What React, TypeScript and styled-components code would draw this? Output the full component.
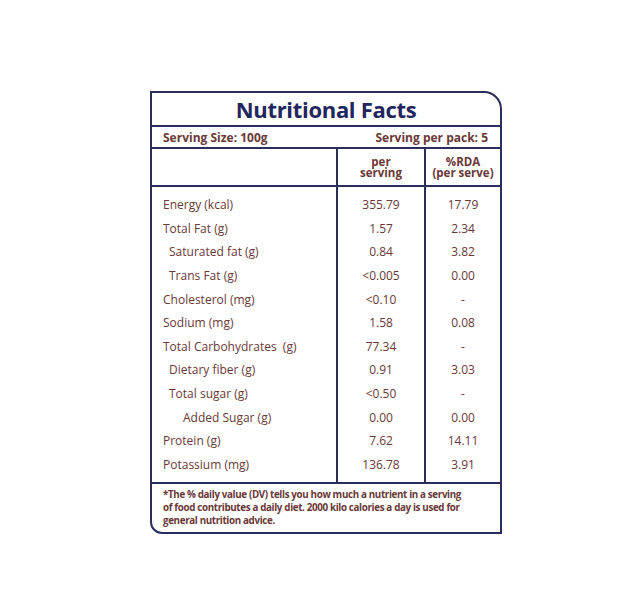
import { FC } from 'react';
import styled, { createGlobalStyle } from 'styled-components';

const GlobalStyle = createGlobalStyle`
  html, body {
    margin: 0;
    padding: 0;
    background: #fff;
  }
  body {
    font-family: 'Open Sans', 'Noto Sans', sans-serif;
  }
`;

const Page = styled.div`
  width: 640px;
  height: 613px;
  padding-top: 91px;
  padding-left: 150px;
  box-sizing: border-box;
`;

const Card = styled.div`
  width: 352px;
  box-sizing: border-box;
  border: 2px solid #2b2d5c;
  border-radius: 0 18px 0 12px;
  color: #6a3837;
`;

const Title = styled.h1`
  margin: 0;
  height: 32px;
  display: flex;
  align-items: center;
  justify-content: center;
  font-size: 22px;
  font-weight: 700;
  color: #23265e;
  letter-spacing: -0.3px;
  border-bottom: 2px solid #2b2d5c;
`;

const ServingRow = styled.div`
  height: 20px;
  display: flex;
  align-items: center;
  justify-content: space-between;
  padding: 0 12px 0 11px;
  font-size: 12px;
  font-weight: 700;
  border-bottom: 2px solid #2b2d5c;
`;

const Grid = styled.div`
  display: grid;
  grid-template-columns: 186px 88px 1fr;
`;

const HeadCell = styled.div<{ $divider?: boolean }>`
  height: 36px;
  display: flex;
  flex-direction: column;
  align-items: center;
  justify-content: center;
  text-align: center;
  font-size: 11.5px;
  font-weight: 700;
  border-bottom: 2px solid #2b2d5c;
  border-right: ${({ $divider }) => ($divider ? '2px solid #2b2d5c' : 'none')};
`;

const HeadLine = styled.span`
  display: block;
  height: 11px;
  line-height: 11px;
`;

const Cell = styled.div<{ $divider?: boolean; $indent?: number; $first?: boolean; $last?: boolean }>`
  height: 23.6px;
  display: flex;
  align-items: center;
  justify-content: ${({ $indent }) => ($indent === undefined ? 'center' : 'flex-start')};
  padding-left: ${({ $indent }) => ($indent === undefined ? 0 : 11 + $indent)}px;
  padding-top: ${({ $first }) => ($first ? 6 : 0)}px;
  padding-bottom: ${({ $last }) => ($last ? 6 : 0)}px;
  font-size: 12px;
  font-weight: 500;
  white-space: pre;
  border-right: ${({ $divider }) => ($divider ? '2px solid #2b2d5c' : 'none')};
`;

const Footnote = styled.p`
  margin: 0;
  border-top: 2px solid #2b2d5c;
  padding: 4px 11px 5px;
  font-size: 9.8px;
  font-weight: 700;
  letter-spacing: -0.35px;
  line-height: 13px;
`;

interface Nutrient {
  name: string;
  indent: number;
  perServing: string;
  rda: string;
}

const nutrients: Nutrient[] = [
  { name: 'Energy (kcal)', indent: 0, perServing: '355.79', rda: '17.79' },
  { name: 'Total Fat (g)', indent: 0, perServing: '1.57', rda: '2.34' },
  { name: 'Saturated fat (g)', indent: 6, perServing: '0.84', rda: '3.82' },
  { name: 'Trans Fat (g)', indent: 6, perServing: '<0.005', rda: '0.00' },
  { name: 'Cholesterol (mg)', indent: 0, perServing: '<0.10', rda: '-' },
  { name: 'Sodium (mg)', indent: 0, perServing: '1.58', rda: '0.08' },
  { name: 'Total Carbohydrates  (g)', indent: 0, perServing: '77.34', rda: '-' },
  { name: 'Dietary fiber (g)', indent: 6, perServing: '0.91', rda: '3.03' },
  { name: 'Total sugar (g)', indent: 6, perServing: '<0.50', rda: '-' },
  { name: 'Added Sugar (g)', indent: 20, perServing: '0.00', rda: '0.00' },
  { name: 'Protein (g)', indent: 0, perServing: '7.62', rda: '14.11' },
  { name: 'Potassium (mg)', indent: 0, perServing: '136.78', rda: '3.91' },
];

const App: FC = () => {
  return (
    <Page>
      <GlobalStyle />
      <Card>
        <Title>Nutritional Facts</Title>

        <ServingRow>
          <span>Serving Size: 100g</span>
          <span>Serving per pack: 5</span>
        </ServingRow>

        <Grid>
          {/* Column headings */}
          <HeadCell $divider />
          <HeadCell $divider>
            <HeadLine>per</HeadLine>
            <HeadLine>serving</HeadLine>
          </HeadCell>
          <HeadCell>
            <HeadLine>%RDA</HeadLine>
            <HeadLine>(per serve)</HeadLine>
          </HeadCell>

          {/* Nutrient rows */}
          {nutrients.map((n, i) => {
            const first = i === 0;
            const last = i === nutrients.length - 1;
            return [
              <Cell key={`${n.name}-a`} $divider $indent={n.indent} $first={first} $last={last}>
                {n.name}
              </Cell>,
              <Cell key={`${n.name}-b`} $divider $first={first} $last={last}>
                {n.perServing}
              </Cell>,
              <Cell key={`${n.name}-c`} $first={first} $last={last}>
                {n.rda}
              </Cell>,
            ];
          })}
        </Grid>

        <Footnote>
          *The % daily value (DV) tells you how much a nutrient in a serving
          <br />
          of food contributes a daily diet. 2000 kilo calories a day is used for
          <br />
          general nutrition advice.
        </Footnote>
      </Card>
    </Page>
  );
};

export default App;
